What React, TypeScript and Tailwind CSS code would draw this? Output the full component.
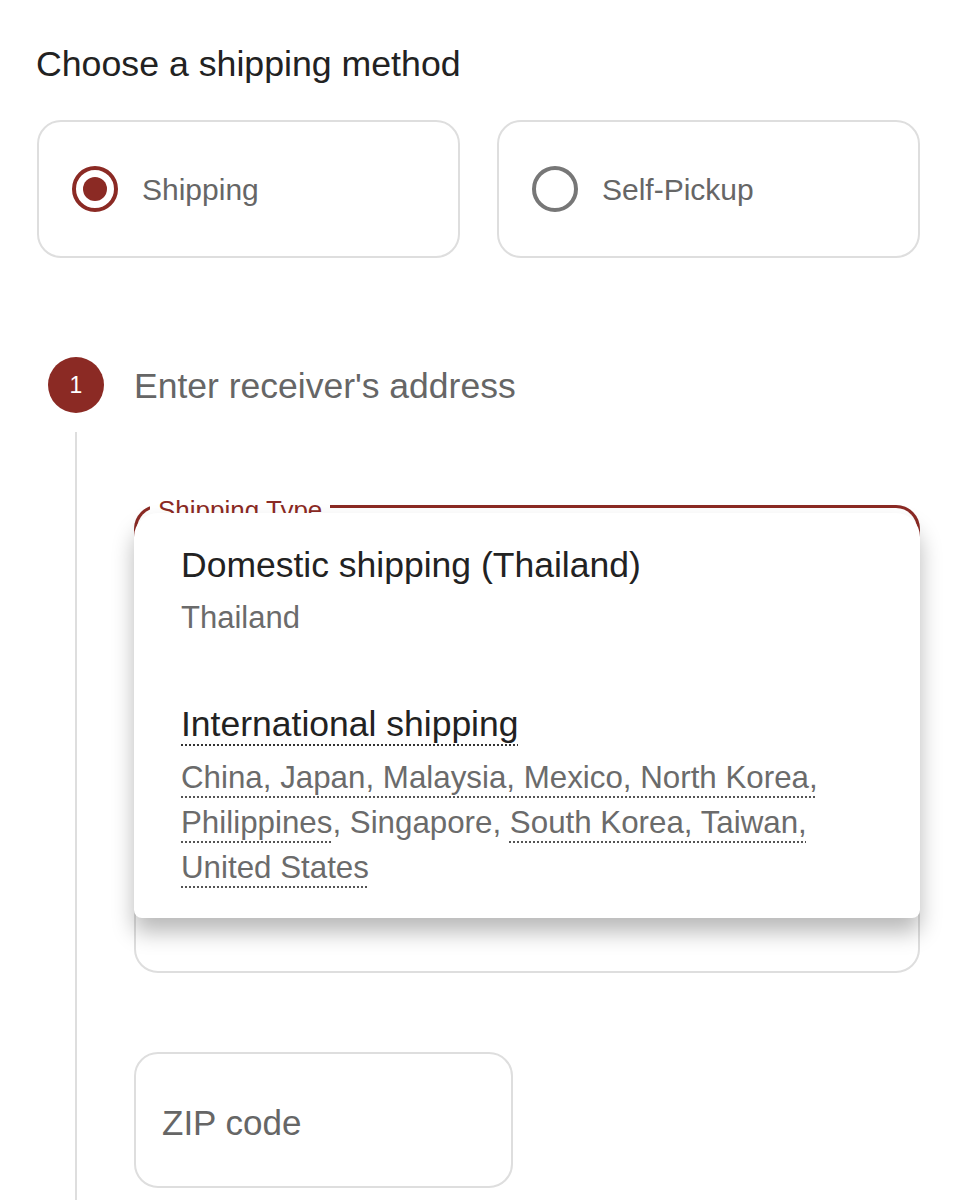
import React from "react";

const RED = "#8b2a24";

function Radio({ checked }: { checked: boolean }) {
  return (
    <svg width="48" height="48" viewBox="0 0 48 48" className="shrink-0">
      <circle cx="24" cy="24" r="21" fill="none" stroke={checked ? RED : "#777"} strokeWidth="4" />
      {checked && <circle cx="24" cy="24" r="12" fill={RED} />}
    </svg>
  );
}

function MethodCard({ label, checked }: { label: string; checked: boolean }) {
  return (
    <div className="flex h-[138px] items-center gap-[23px] rounded-[24px] border-2 border-[#dedede] bg-white pl-[32px]">
      <Radio checked={checked} />
      <span className="text-[30px] text-[#666]">{label}</span>
    </div>
  );
}

export default function App() {
  return (
    <div className="min-h-[1200px] bg-white font-['Liberation_Sans',Arial,sans-serif] pl-[36px] pr-[37px] pt-[44px]">
      <h1 className="text-[35.7px] leading-[40px] text-[#222]">Choose a shipping method</h1>

      <div className="mt-[36px] grid grid-cols-2 gap-[37px] pl-px">
        <MethodCard label="Shipping" checked />
        <MethodCard label="Self-Pickup" checked={false} />
      </div>

      {/* step 1 */}
      <div className="mt-[99px] flex items-center gap-[30px] pl-[12px]">
        <div className="flex h-[56px] w-[56px] items-center justify-center rounded-full bg-[#8b2a24] text-[23px] text-white">
          1
        </div>
        <span className="pt-[3px] text-[35.5px] text-[#666]">Enter receiver's address</span>
      </div>

      <div className="mt-[19px] flex">
        <div className="ml-[39px] w-[2px] shrink-0 bg-[#dedede]" />
        <div className="ml-[57px] flex-1 pt-[73px] pb-[20px]">
          {/* shipping type field with open menu */}
          <div className="relative h-[468px] rounded-[24px] border-2 border-[#dedede]">
            <div className="absolute -left-[2px] -right-[2px] -top-[2px] h-[60px] rounded-t-[24px] border-x-[3px] border-t-[3px] border-[#8b2a24]" />
            <span className="absolute left-[14px] -top-[12px] bg-white px-[8px] text-[26px] leading-[30px] text-[#8b2a24]">
              Shipping Type
            </span>
            <div className="absolute -left-[2px] -right-[2px] top-[6px] z-10 h-[405px] rounded-t-[24px] rounded-b-[8px] bg-white pl-[47px] pt-[32px] shadow-[0_14px_22px_rgba(0,0,0,0.28)]">
              <div className="text-[35.5px] leading-[40px] text-[#222]">Domestic shipping (Thailand)</div>
              <div className="mt-[10px] text-[31px] leading-[45px] text-[#6b6b6b]">Thailand</div>

              <div className="mt-[64px] text-[35.5px] leading-[40px] text-[#222]">
                <span className="underline decoration-dotted decoration-[#333] decoration-2 underline-offset-[8px]">
                  International shipping
                </span>
              </div>
              <div className="mt-[11px] w-[670px] text-[31.3px] leading-[45px] text-[#6b6b6b]">
                <span className="underline decoration-dotted decoration-[#555] decoration-2 underline-offset-[8px]">
                  China, Japan, Malaysia, Mexico, North Korea, Philippines
                </span>
                , Singapore,{" "}
                <span className="underline decoration-dotted decoration-[#555] decoration-2 underline-offset-[8px]">
                  South Korea, Taiwan, United States
                </span>
              </div>
            </div>
          </div>

          {/* zip code */}
          <div className="mt-[79px] flex h-[136px] w-[379px] items-center rounded-[24px] border-2 border-[#dedede] pl-[26px] pt-[6px]">
            <span className="text-[35px] text-[#666]">ZIP code</span>
          </div>
        </div>
      </div>
    </div>
  );
}
